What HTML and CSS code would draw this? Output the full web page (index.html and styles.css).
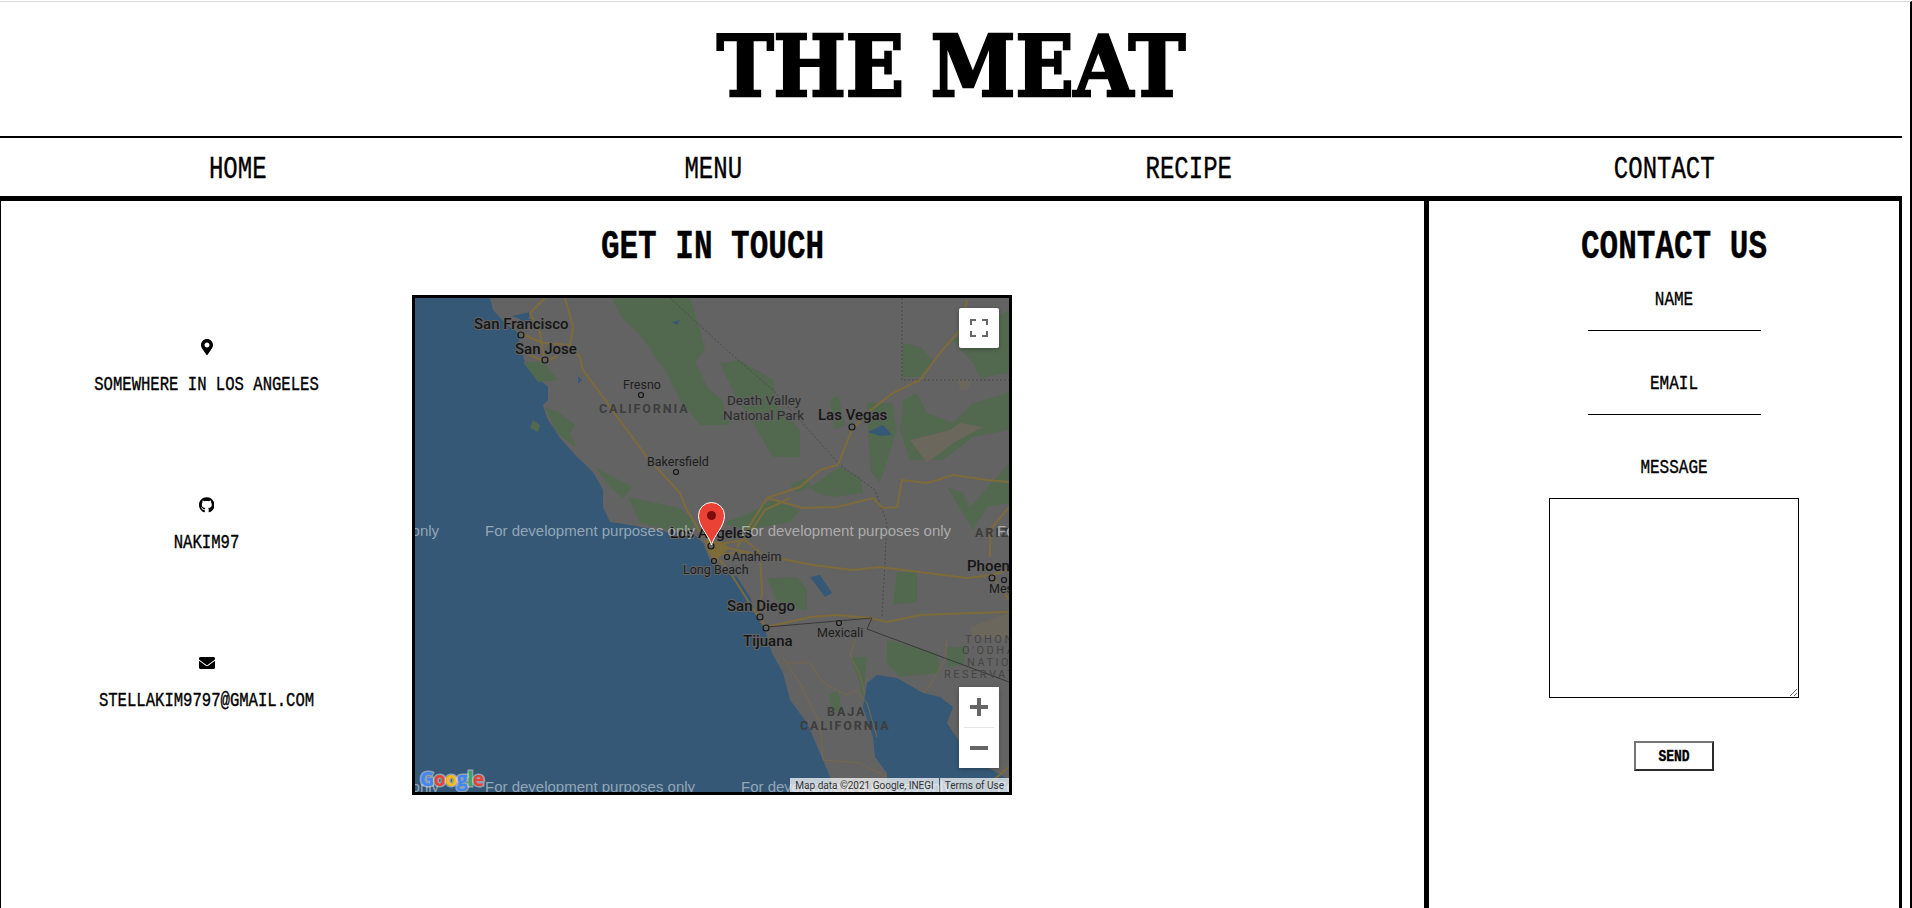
FILE: index.html
```html
<!DOCTYPE html>
<html lang="en">

<head>
    <meta charset="UTF-8">
    <meta name="viewport" content="width=device-width, initial-scale=1.0">
    <title>The Meat - Contact</title>
    <link rel="stylesheet" href="styles.css">
</head>

<body>
    <div class="page">
        <header class="title-bar">
            <h1>THE MEAT</h1>
        </header>

        <nav class="nav">
            <a href="#"><span class="tall">HOME</span></a>
            <a href="#"><span class="tall">MENU</span></a>
            <a href="#"><span class="tall">RECIPE</span></a>
            <a href="#"><span class="tall">CONTACT</span></a>
        </nav>

        <main class="main">
            <section class="touch">
                <h2><span class="tall">GET IN TOUCH</span></h2>
                <div class="touch-row">
                    <ul class="info">
                        <li>
                            <svg class="icon" viewBox="0 0 384 512"><path d="M172.268 501.67C26.97 291.031 0 268.413 0 192 0 85.961 85.961 0 192 0s192 85.961 192 192c0 76.413-26.97 99.031-172.268 309.67-9.535 13.774-29.93 13.773-39.464 0zM192 272c44.183 0 80-35.817 80-80s-35.817-80-80-80-80 35.817-80 80 35.817 80 80 80z"/></svg>
                            <span class="tall">SOMEWHERE IN LOS ANGELES</span>
                        </li>
                        <li>
                            <svg class="icon" viewBox="0 0 496 512"><path d="M165.9 397.4c0 2-2.3 3.6-5.2 3.6-3.3 0-5.6-1.6-5.6-3.6 0-2 2.3-3.6 5.2-3.6 3-.3 5.6 1.3 5.6 3.6zm-31.1-4.5c-.7 2 1.3 4.3 4.3 4.9 2.6 1 5.6 0 6.2-2s-1.3-4.3-4.3-5.2c-2.6-.7-5.5.3-6.2 2.3zm44.2-1.7c-2.9.7-4.9 2.6-4.6 4.9.3 2 2.9 3.3 5.9 2.6 2.9-.7 4.9-2.6 4.6-4.6-.3-1.9-3-3.2-5.9-2.9zM244.8 8C106.1 8 0 113.3 0 252c0 110.9 69.8 205.8 169.5 239.2 12.8 2.3 17.3-5.6 17.3-12.1 0-6.2-.3-40.4-.3-61.4 0 0-70 15-84.7-29.8 0 0-11.4-29.1-27.8-36.6 0 0-22.9-15.7 1.6-15.4 0 0 24.9 2 38.6 25.8 21.9 38.6 58.6 27.5 72.9 20.9 2.3-16 8.8-27.1 16-33.7-55.9-6.2-112.3-14.3-112.3-110.5 0-27.5 7.6-41.3 23.6-58.9-2.6-6.5-11.1-33.3 2.6-67.9 20.9-6.5 69 27 69 27 20-5.6 41.5-8.5 62.8-8.5s42.8 2.9 62.8 8.5c0 0 48.1-33.6 69-27 13.7 34.7 5.2 61.4 2.6 67.9 16 17.7 25.8 31.5 25.8 58.9 0 96.5-58.9 104.2-114.8 110.5 9.2 7.9 17 22.9 17 46.4 0 33.7-.3 75.4-.3 83.6 0 6.5 4.6 14.4 17.3 12.1C428.2 457.8 496 362.9 496 252 496 113.3 383.5 8 244.8 8z"/></svg>
                            <span class="tall">NAKIM97</span>
                        </li>
                        <li>
                            <svg class="icon" viewBox="0 0 512 512"><path d="M502.3 190.8c3.9-3.1 9.7-.2 9.7 4.7V400c0 26.5-21.5 48-48 48H48c-26.5 0-48-21.5-48-48V195.6c0-5 5.7-7.8 9.7-4.7 22.4 17.4 52.1 39.5 154.1 113.6 21.1 15.4 56.7 47.8 92.2 47.6 35.7.3 72-32.8 92.3-47.6 102-74.1 131.6-96.3 154-113.7zM256 320c23.2.4 56.6-29.2 73.4-41.4 132.7-96.3 142.8-104.7 173.4-128.7 5.8-4.5 9.2-11.5 9.2-18.9v-19c0-26.5-21.5-48-48-48H48C21.5 64 0 85.5 0 112v19c0 7.4 3.4 14.3 9.2 18.9 30.6 23.9 40.7 32.4 173.4 128.7 16.8 12.2 50.2 41.8 73.4 41.4z"/></svg>
                            <span class="tall">STELLAKIM9797@GMAIL.COM</span>
                        </li>
                    </ul>

                    <div class="map">
                        <!-- viewBox uses page coordinates, easier to line up with the screenshot -->
                        <svg class="map-canvas" viewBox="415 298 594 494">
                            <rect class="land" x="415" y="298" width="594" height="494"/>

                            <path class="sea" d="M415 298 L490 298 493 310 507 325 518 333 520 348 525 362 538 378 548 387 548 400 543 405 547 418 560 438 577 457 593 472 603 490 603 507 610 522 630 525 667 532 693 533 703 543 707 553 712 565 737 577 750 597 757 617 765 630 772 653 783 673 790 700 807 723 823 760 830 777 833 792 415 792 Z"/>
                            <path class="sea" d="M867 683 L877 675 897 678 923 693 940 697 953 707 947 723 963 747 987 767 1009 780 1009 792 887 792 887 773 875 757 873 737 863 707 Z"/>

                            <g class="green">
                                <polygon points="612,298 690,298 700,330 705,350 695,362 708,388 722,400 730,425 700,425 680,400 665,370 640,335 622,318"/>
                                <polygon points="720,363 740,360 773,380 775,403 800,430 800,457 773,457 753,423 735,395"/>
                                <polygon points="523,362 543,362 558,380 538,382"/>
                                <polygon points="545,407 560,413 575,425 570,433 577,448 557,433"/>
                                <polygon points="595,467 613,477 632,487 623,498 610,487"/>
                                <polygon points="628,497 680,508 695,522 690,535 640,523"/>
                                <polygon points="723,523 750,513 772,500 800,510 790,522 745,530"/>
                                <polygon points="810,487 840,467 860,477 863,493 833,497 817,493"/>
                                <polygon points="903,400 917,393 927,413 953,423 973,403 1009,393 1009,430 973,437 943,460 910,460 900,430"/>
                                <polygon points="903,343 920,347 933,360 920,377 903,377"/>
                                <polygon points="953,340 1009,310 1009,373 980,378 973,363"/>
                                <polygon points="947,487 963,493 970,507 1009,463 1009,503 987,507 973,530"/>
                                <polygon points="867,403 892,403 897,430 880,483 870,470"/>
                                <polygon points="897,572 917,572 917,602 893,605"/>
                                <polygon points="887,640 937,653 940,673 900,677 887,663"/>
                                <polygon points="850,657 867,657 863,700 858,677"/>
                                <polygon points="767,578 797,577 807,590 807,610 780,607"/>
                                <polygon points="947,647 967,647 963,665 947,667"/>
                                <polygon points="830,400 838,395 845,425 835,430"/>
                                <polygon points="790,485 805,478 812,487 798,492"/>
                                <polygon points="533,420 540,425 538,432 530,428"/>
                                <polygon points="829,695 838,690 842,712 832,712"/>
                            </g>

                            <g class="tan">
                                <polygon points="910,440 950,430 960,423 983,427 953,443 927,463"/>
                                <polygon points="970,627 1009,613 1009,640 973,637"/>
                                <polygon points="958,380 972,380 968,390 960,390"/>
                            </g>

                            <g class="water">
                                <polygon points="810,577 820,575 832,593 825,597"/>
                                <polygon points="520,317 533,320 520,325"/>
                                <polygon points="672,322 680,320 677,325"/>
                                <polygon points="868,432 883,425 892,435 880,436"/>
                                <polygon points="578,376 582,380 578,384"/>
                                <polygon points="512,316 530,312 528,322"/>
                            </g>

                            <g class="border-dash">
                                <polyline points="670,298 730,353 773,390 840,465 875,490 887,523 882,617"/>
                                <polyline points="902,298 902,380 1009,380"/>
                            </g>

                            <g class="road">
                                <polyline points="565,298 573,327 570,345 580,357 583,370 600,393 627,430 647,457 680,493 687,510 703,537"/>
                                <polyline points="545,298 530,313 540,333 543,353 545,360"/>
                                <polyline points="520,333 543,343 570,345"/>
                                <polyline points="523,352 545,362 557,356"/>
                                <polyline points="767,498 800,487 820,470 838,465 845,447 852,430 867,413 893,393 920,380 940,353 960,330 967,300"/>
                                <polyline points="767,498 747,530 737,547"/>
                                <polyline points="767,498 803,508 837,507 873,498 883,508 897,507 902,480 927,483 953,475 987,480 1009,482"/>
                                <polyline points="712,545 787,560 813,565 853,570 880,567 920,572 967,578 992,575 1009,570"/>
                                <polyline points="767,627 810,617 837,615 870,618 887,622 920,615 973,613 1009,612"/>
                                <polyline points="720,560 733,577 757,615 767,628"/>
                                <polyline points="760,552 762,593 758,617"/>
                                <polyline points="988,792 990,783 1009,767"/>
                                <polyline points="990,557 990,530 1009,507"/>
                                <polyline points="992,575 1009,600"/>
                                <polyline points="700,530 712,545 745,540 760,552"/>
                                <polyline points="715,555 745,552 775,560"/>
                                <polyline points="745,540 765,510 790,498"/>
                            </g>
                            <polygon class="metro" points="704,540 722,542 730,548 720,556 716,564 708,552"/>

                            <g class="road-thin">
                                <polyline points="787,663 810,663 823,683 847,695 857,690 867,703 877,737"/>
                                <polyline points="783,658 800,683 820,723 823,760 860,763 887,777"/>
                                <polyline points="860,627 850,655 860,675 865,695"/>
                                <polyline points="925,693 945,660 947,640"/>
                            </g>

                            <g class="border-solid">
                                <polyline points="767,627 872,618 867,629 1009,682"/>
                            </g>

                            <g class="place">
                                <circle cx="521" cy="335" r="3"/>
                                <circle cx="545" cy="360" r="3"/>
                                <circle cx="641" cy="395" r="2.5"/>
                                <circle cx="676" cy="472" r="2.5"/>
                                <circle cx="852" cy="427" r="3"/>
                                <circle cx="711" cy="546" r="3"/>
                                <circle cx="714" cy="561" r="2.5"/>
                                <circle cx="727" cy="557" r="2.5"/>
                                <circle cx="760" cy="617" r="3"/>
                                <circle cx="766" cy="628" r="3"/>
                                <circle cx="839" cy="623" r="2.5"/>
                                <circle cx="992" cy="578" r="3"/>
                                <circle cx="1004" cy="580" r="2.5"/>
                            </g>

                            <g class="city">
                                <text x="623" y="389">Fresno</text>
                                <text x="647" y="466">Bakersfield</text>
                                <text x="683" y="574">Long Beach</text>
                                <text x="732" y="561">Anaheim</text>
                                <text x="817" y="637">Mexicali</text>
                                <text x="989" y="593">Mesa</text>
                            </g>
                            <g class="city-big">
                                <text x="474" y="329">San Francisco</text>
                                <text x="515" y="354">San Jose</text>
                                <text x="818" y="420">Las Vegas</text>
                                <text x="670" y="538">Los Angeles</text>
                                <text x="727" y="611">San Diego</text>
                                <text x="743" y="646">Tijuana</text>
                                <text x="967" y="571">Phoenix</text>
                            </g>
                            <g class="park">
                                <text x="727" y="405">Death Valley</text>
                                <text x="723" y="420">National Park</text>
                            </g>
                            <g class="region">
                                <text x="599" y="413">CALIFORNIA</text>
                                <text x="827" y="716">BAJA</text>
                                <text x="800" y="730">CALIFORNIA</text>
                                <text x="975" y="537">ARIZONA</text>
                            </g>
                            <g class="reserve">
                                <text x="965" y="643">TOHONO</text>
                                <text x="962" y="654">O'ODHAM</text>
                                <text x="967" y="666">NATION</text>
                                <text x="944" y="678">RESERVATION</text>
                            </g>

                            <g class="dev-note">
                                <text x="229" y="536">For development purposes only</text>
                                <text x="485" y="536">For development purposes only</text>
                                <text x="741" y="536">For development purposes only</text>
                                <text x="997" y="536">For development purposes only</text>
                                <text x="229" y="792">For development purposes only</text>
                                <text x="485" y="792">For development purposes only</text>
                                <text x="741" y="792">For development purposes only</text>
                                <text x="997" y="792">For development purposes only</text>
                            </g>

                            <!-- marker -->
                            <path class="pin" d="M711.5 545 C709 535 698.500 527 698.500 515.500 A13 13 0 0 1 724.500 515.500 C724.500 527 714 535 711.500 545 Z"/>
                            <circle class="pin-dot" cx="711.500" cy="515.500" r="4.500"/>

                            <text class="google" x="420" y="786"><tspan class="g-blue">G</tspan><tspan class="g-red">o</tspan><tspan class="g-yellow">o</tspan><tspan class="g-blue">g</tspan><tspan class="g-green">l</tspan><tspan class="g-red">e</tspan></text>
                        </svg>

                        <button class="map-btn fullscreen" type="button" aria-label="Fullscreen">
                            <svg viewBox="0 0 18 18"><path d="M1 6V1H6M12 1H17V6M17 12V17H12M6 17H1V12"/></svg>
                        </button>

                        <div class="zoom-ctrl">
                            <button class="map-btn" type="button" aria-label="Zoom in">
                                <svg viewBox="0 0 18 18"><path d="M7 0H11V7H18V11H11V18H7V11H0V7H7Z"/></svg>
                            </button>
                            <div class="zoom-sep"></div>
                            <button class="map-btn" type="button" aria-label="Zoom out">
                                <svg viewBox="0 0 18 18"><path d="M0 7H18V11H0Z"/></svg>
                            </button>
                        </div>

                        <div class="attrib">
                            <span class="attrib-data">Map data ©2021 Google, INEGI</span>
                            <span class="attrib-terms">Terms of Use</span>
                        </div>
                    </div>
                </div>
            </section>

            <aside class="contact">
                <h2><span class="tall">CONTACT US</span></h2>
                <form class="contact-form">
                    <label for="name"><span class="tall">NAME</span></label>
                    <input type="text" id="name" name="name">
                    <label for="email"><span class="tall">EMAIL</span></label>
                    <input type="text" id="email" name="email">
                    <label for="message"><span class="tall">MESSAGE</span></label>
                    <textarea id="message" name="message"></textarea>
                    <button class="send" type="button"><span class="tall">SEND</span></button>
                </form>
            </aside>
        </main>
    </div>
</body>

</html>
```

FILE: styles.css
```css
html,
body {
    height: 100%;
    overflow: hidden;
}

html {
    padding-top: 1px;
    box-sizing: border-box;
}

body {
    margin: 0;
    width: 1910px;
    border-top: 1px solid #ddd;
    border-right: 2px solid #000;
    background: #fff;
    color: #000;
    font-family: "Liberation Mono", monospace;
}

.page {
    width: 1902px;
    height: 100%;
    display: flex;
    flex-direction: column;
}

/* stretches the mono font up, reference face is tall and narrow */
.tall {
    display: inline-block;
    transform: scaleY(1.3);
    -webkit-text-stroke: 0.3px #000;
}

.title-bar {
    height: 128px;
    padding-bottom: 6px;
    border-bottom: 2px solid #000;
    display: flex;
    align-items: center;
    justify-content: center;
}

.title-bar h1 {
    margin: 0;
    font-family: "DejaVu Serif Condensed", "DejaVu Serif", serif;
    font-size: 85px;
    font-weight: bold;
    -webkit-text-stroke: 2.5px #000;
}

.nav {
    height: 54px;
    padding-top: 4px;
    display: grid;
    grid-template-columns: repeat(4, 1fr);
    align-items: center;
    text-align: center;
    border-bottom: 5px solid #000;
}

.nav a {
    color: #000;
    text-decoration: none;
    font-size: 24px;
}

.main {
    flex: 1;
    display: flex;
    border-left: 1px solid #000;
}

h2 {
    margin: 27px 0 0;
    height: 40px;
    line-height: 40px;
    font-size: 31px;
    text-align: center;
}

.touch {
    flex: 1;
}

.touch-row {
    display: flex;
    margin-top: 27px;
}

.info {
    width: 411px;
    margin: 0;
    padding: 44px 0 0;
    list-style: none;
    display: flex;
    flex-direction: column;
    gap: 102px;
    font-size: 15.6px;
    line-height: 20px;
    text-align: center;
}

.info li {
    display: flex;
    flex-direction: column;
    align-items: center;
    gap: 20px;
}

.icon {
    display: block;
    height: 16px;
    fill: #000;
}

.map {
    position: relative;
    width: 600px;
    height: 500px;
    box-sizing: border-box;
    border: 3px solid #000;
    overflow: hidden;
}

.map-canvas {
    display: block;
    width: 594px;
    height: 494px;
}

.land { fill: #636363; }
.sea { fill: #345876; }
.green polygon { fill: #52694f; }
.tan polygon { fill: #6b675d; }
.water polygon { fill: #345876; }

.road polyline {
    fill: none;
    stroke: #7d6c3a;
    stroke-width: 2;
}

.road-thin polyline {
    fill: none;
    stroke: #77694a;
    stroke-width: 1;
}

.metro { fill: #7d6c3a; }

.border-dash polyline {
    fill: none;
    stroke: #4a4a4a;
    stroke-width: 1;
    stroke-dasharray: 2 2;
}

.border-solid polyline {
    fill: none;
    stroke: #383838;
    stroke-width: 1;
}

.place circle {
    fill: #636363;
    stroke: #161616;
    stroke-width: 1.2;
}

.map-canvas text {
    font-family: Roboto, "Liberation Sans", sans-serif;
}

.city text,
.city-big text,
.park text {
    paint-order: stroke;
    stroke: #636363;
    stroke-width: 2;
}

.city text {
    font-size: 12.5px;
    fill: #1e1e1e;
}

.city-big text {
    font-size: 15px;
    font-weight: 500;
    fill: #161616;
}

.park text {
    font-size: 13.5px;
    fill: #2c2c2c;
}

.region text {
    font-size: 12.5px;
    font-weight: bold;
    letter-spacing: 1.9px;
    fill: #3d3d3d;
}

.reserve text {
    font-size: 11px;
    letter-spacing: 2.5px;
    fill: #454545;
}

.map-canvas .dev-note text {
    font-family: "Liberation Sans", Arial, sans-serif;
    font-size: 15px;
    fill: rgba(255, 255, 255, 0.48);
}

.pin {
    fill: #ea4335;
    stroke: #fff;
    stroke-width: 1;
}

.pin-dot { fill: #7d0c0c; }

.map-canvas .google {
    font-family: "Open Sans", sans-serif;
    font-size: 19.5px;
    font-weight: bold;
    letter-spacing: -0.5px;
    paint-order: stroke;
    stroke: rgba(255, 255, 255, 0.45);
    stroke-width: 3;
}

.g-blue { fill: #4285f4; }
.g-red { fill: #ea4335; }
.g-yellow { fill: #fbbc05; }
.g-green { fill: #34a853; }

.map-btn {
    display: flex;
    align-items: center;
    justify-content: center;
    width: 40px;
    height: 40px;
    padding: 0;
    border: 0;
    background: #fff;
}

.map-btn svg {
    width: 18px;
    height: 18px;
    fill: #666;
}

.fullscreen {
    position: absolute;
    top: 10px;
    right: 10px;
    border-radius: 2px;
    box-shadow: 0 1px 4px rgba(0, 0, 0, 0.3);
}

.fullscreen svg {
    fill: none;
    stroke: #666;
    stroke-width: 2;
}

.zoom-ctrl {
    position: absolute;
    top: 389px;
    right: 10px;
    width: 40px;
    background: #fff;
    border-radius: 2px;
    box-shadow: 0 1px 4px rgba(0, 0, 0, 0.3);
}

.zoom-sep {
    height: 1px;
    margin: 0 5px;
    background: #e6e6e6;
}

.attrib {
    position: absolute;
    right: 0;
    bottom: 0;
    display: flex;
    gap: 1px;
    height: 14px;
    font-family: Roboto, "Liberation Sans", sans-serif;
    font-size: 10px;
    line-height: 15px;
    color: #333;
}

.attrib span {
    background: rgba(255, 255, 255, 0.72);
    padding: 0 5px;
}

.contact {
    width: 478px;
    box-sizing: border-box;
    border-left: 5px solid #000;
    border-right: 3px solid #000;
    padding-left: 20px;
}

.contact-form {
    display: flex;
    flex-direction: column;
    align-items: center;
    margin-top: 22px;
    font-size: 16px;
    line-height: 20px;
}

.contact-form input {
    width: 173px;
    height: 21px;
    box-sizing: border-box;
    margin: 0 0 43px;
    padding: 0;
    border: 0;
    border-bottom: 1px solid #000;
    outline: none;
}

.contact-form textarea {
    width: 250px;
    height: 200px;
    box-sizing: border-box;
    margin-top: 20px;
    border: 1px solid #000;
    outline: none;
}

.send {
    width: 80px;
    height: 30px;
    box-sizing: border-box;
    margin-top: 43px;
    padding: 0;
    background: #fff;
    border: 2px solid;
    border-color: #767676 #2b2b2b #2b2b2b #767676;
    color: #000;
    font-family: "Liberation Mono", monospace;
    font-size: 13px;
    font-weight: bold;
}
```
